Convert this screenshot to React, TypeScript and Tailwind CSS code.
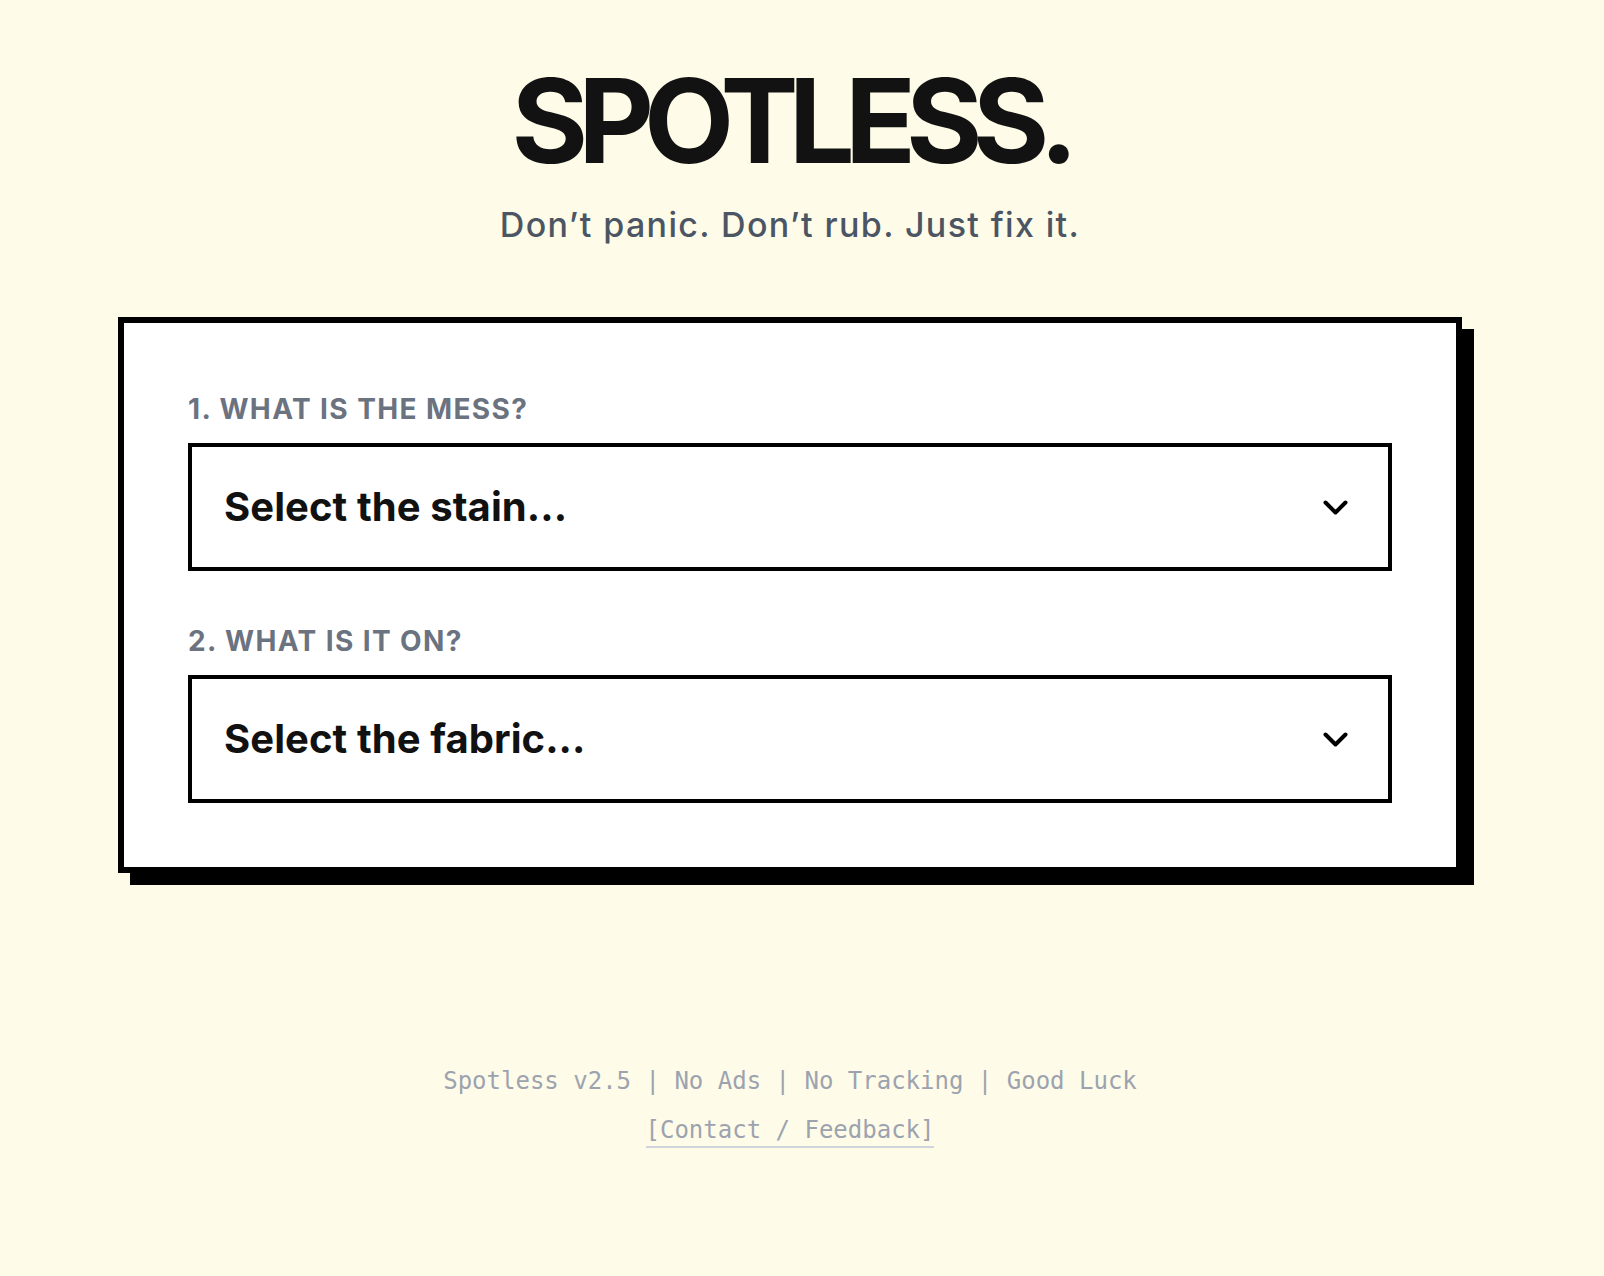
import React from "react";

const fields = [
  { label: "1. What is the mess?", placeholder: "Select the stain..." },
  { label: "2. What is it on?", placeholder: "Select the fabric..." },
];

export default function App() {
  return (
    <div className="min-h-screen bg-[#fefce8] pr-6 font-['Inter',sans-serif]">
      {/* Header */}
      <header className="flex flex-col items-center pt-[62px]">
        <h1 className="text-[117px] leading-none font-bold tracking-[-0.085em] text-[#121212]">SPOTLESS.</h1>
        <p className="mt-[26px] text-[34px] leading-[40px] font-medium tracking-[0.04em] text-[#4b5563]">
          Don’t panic. Don’t rub. Just fix it.
        </p>
      </header>

      {/* Card */}
      <main className="mx-auto mt-[72px] w-[1344px] border-[6px] border-black bg-white p-16 shadow-[12px_12px_0_0_#000]">
        {fields.map((f, i) => (
          <div key={i} className={i > 0 ? "mt-[50px]" : ""}>
            <label className="mt-[2px] mb-[14px] block text-[28px] leading-[40px] font-bold uppercase tracking-wider text-[#6b7280]">
              {f.label}
            </label>
            <button className="flex h-[128px] w-full items-center justify-between border-4 border-black bg-white pl-8 pr-10 text-left">
              <span className="text-[40px] font-bold tracking-[0.002em] text-[#111111]">{f.placeholder}</span>
              <svg width="25" height="15" viewBox="0 0 25 15" fill="none">
                <path d="M2.5 2.5 L12.5 12.5 L22.5 2.5" stroke="#000" strokeWidth="4" strokeLinecap="round" strokeLinejoin="round" />
              </svg>
            </button>
          </div>
        ))}
      </main>

      {/* Footer */}
      <footer className="mt-[192px] flex flex-col items-center font-['DejaVu_Sans_Mono',monospace] text-[24px] leading-8 text-[#9ca3af]">
        <p>Spotless v2.5 | No Ads | No Tracking | Good Luck</p>
        <a href="#" className="mt-[17px] inline-block border-b-2 border-[#d1d5db]">
          [Contact / Feedback]
        </a>
      </footer>
    </div>
  );
}
